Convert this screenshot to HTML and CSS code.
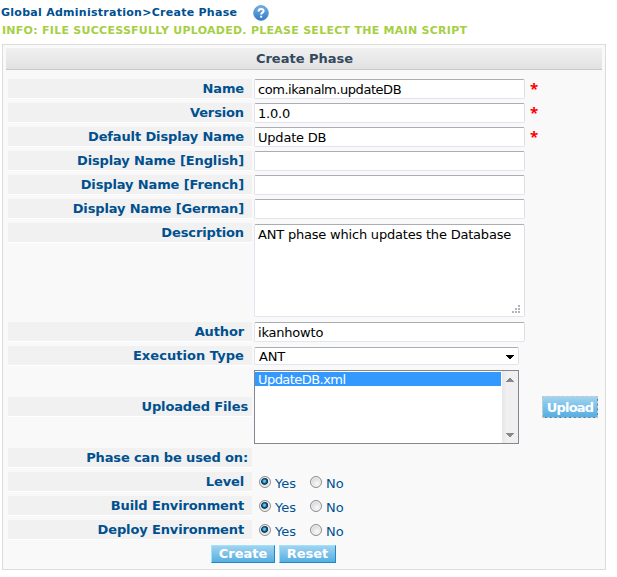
FILE: index.html
```html
<!DOCTYPE html>
<html lang="en">
<head>
<meta charset="utf-8">
<title>Create Phase</title>
<link rel="stylesheet" href="styles.css">
</head>
<body>
<header class="crumbs">
  <span>Global Administration&gt;Create Phase</span>
  <svg class="help" width="16" height="16" viewBox="0 0 16 16" aria-label="Help">
    <defs><linearGradient id="h" x1="0" y1="0" x2="0" y2="1"><stop offset="0" stop-color="#75b3e6"/><stop offset="1" stop-color="#2f78c2"/></linearGradient></defs>
    <circle cx="8" cy="8" r="7.4" fill="url(#h)" stroke="#5e96cb" stroke-width=".8"/>
    <path d="M5.500 6.400C5.500 4.500 6.600 3.900 8 3.900s2.600.8 2.600 2.200C10.600 7.700 8.200 7.700 8.200 9.500" fill="none" stroke="#fff" stroke-width="2"/>
    <rect x="7.200" y="10.700" width="2" height="2" fill="#fff"/>
  </svg>
</header>
<p class="info">INFO: FILE SUCCESSFULLY UPLOADED. PLEASE SELECT THE MAIN SCRIPT</p>
<form class="panel">
  <h1>Create Phase</h1>
  <div class="row"><label>Name</label><input class="field dotted-name" value="com.ikanalm.updateDB"><b class="req">*</b></div>
  <div class="row"><label>Version</label><input class="field" value="1.0.0"><b class="req">*</b></div>
  <div class="row"><label>Default Display Name</label><input class="field" value="Update DB"><b class="req">*</b></div>
  <div class="row"><label>Display Name [English]</label><input class="field"></div>
  <div class="row"><label>Display Name [French]</label><input class="field"></div>
  <div class="row"><label>Display Name [German]</label><input class="field"></div>
  <div class="row tall"><label>Description</label>
    <div class="field area"><span>ANT phase which updates the Database</span>
      <svg class="grip" width="8" height="8" fill="#b4b4b4"><path d="M6 0h2v2H6zM3 3h2v2H3zM6 3h2v2H6zM0 6h2v2H0zM3 6h2v2H3zM6 6h2v2H6z"/></svg>
    </div>
  </div>
  <div class="row"><label>Author</label><input class="field" value="ikanhowto"></div>
  <div class="row"><label class="loose">Execution Type</label>
    <div class="field select"><span>ANT</span><svg width="8" height="4"><path d="M0 0h8v1H7v1H6v1H5v1H3V3H2V2H1V1H0z"/></svg></div>
  </div>
  <div class="row files"><label class="wide">Uploaded Files</label>
    <div class="list">
      <div class="options"><div class="option">UpdateDB.xml</div></div>
      <div class="scroll">
        <svg width="8" height="4" fill="#888"><path d="M3 0h2v1h1v1h1v1h1v1H0V3h1V2h1V1h1z"/></svg>
        <svg width="8" height="4" fill="#888"><path d="M0 0h8v1H7v1H6v1H5v1H3V3H2V2H1V1H0z"/></svg>
      </div>
    </div>
    <button type="button" class="btn upload">Upload</button>
  </div>
  <div class="row"><label class="group">Phase can be used on:</label></div>
  <div class="row"><label>Level</label><div class="radios"><input type="radio" name="a" checked><span>Yes</span><input type="radio" name="a"><span>No</span></div></div>
  <div class="row"><label>Build Environment</label><div class="radios"><input type="radio" name="b" checked><span>Yes</span><input type="radio" name="b"><span>No</span></div></div>
  <div class="row"><label>Deploy Environment</label><div class="radios"><input type="radio" name="c" checked><span>Yes</span><input type="radio" name="c"><span>No</span></div></div>
  <div class="actions"><button type="button" class="btn create">Create</button><button type="button" class="btn reset">Reset</button></div>
</form>
</body>
</html>
```
FILE: styles.css
```css
* { box-sizing: border-box; }
body {
  margin: 0;
  background: #fff;
  color: #00508f;
  font: 13px/16px Verdana, "DejaVu Sans", sans-serif;
  overflow: hidden;
}
.crumbs {
  display: flex;
  align-items: center;
  height: 23px;
  padding: 2px 0 0 1px;
  font-size: 11px;
  font-weight: bold;
  letter-spacing: .27px;
}
.help { margin-left: 16px; }
.info {
  height: 21px;
  margin: 0;
  padding-left: 2px;
  color: #a5cf45;
  font-size: 11px;
  font-weight: bold;
  letter-spacing: .27px;
  white-space: nowrap;
}
.panel {
  width: 604px;
  height: 526px;
  margin-left: 2px;
  padding: 3px;
  border: 1px solid #dcdcdc;
  background: #f9f9f9;
}
h1 {
  height: 22px;
  margin: 0 0 9px;
  padding-left: 1px;
  border-bottom: 1px solid #c8c8c8;
  background: linear-gradient(#f0f0f0, #e2e2e2);
  color: #34495e;
  font-size: 13px;
  line-height: 21px;
  text-align: center;
}
.row {
  display: flex;
  align-items: flex-start;
  height: 24px;
  padding-left: 2px;
}
label {
  flex: none;
  width: 244px;
  height: 20px;
  margin-right: 2px;
  padding-right: 8px;
  border-bottom: 1px solid #fff;
  background: #f1f1f1;
  font-weight: bold;
  letter-spacing: -.13px;
  line-height: 19px;
  text-align: right;
}
label.wide, label.group { padding-right: 4px; }
label.loose { letter-spacing: .05px; }
.field {
  width: 271px;
  height: 20px;
  padding: 1px 3px 0;
  border: 1px solid #e2e5ee;
  border-top-color: #abadb3;
  border-right-color: #dbdfe6;
  border-radius: 2px;
  outline: 0;
  background: #fff;
  color: #000;
  font: inherit;
  letter-spacing: -.2px;
}
.dotted-name { letter-spacing: -.45px; }
.req {
  margin-left: 5px;
  color: #f00;
  font: bold 15px/18px "Noto Sans", sans-serif;
}
.tall { height: 99px; }
.area {
  display: flex;
  justify-content: space-between;
  height: 93px;
  margin-top: 1px;
  padding: 2px 4px 3px 3px;
  white-space: nowrap;
}
.grip { flex: none; align-self: flex-end; margin-left: -8px; }
.select {
  display: flex;
  align-items: center;
  justify-content: space-between;
  width: 265px;
  height: 18px;
  margin-top: 1px;
  padding: 1px 4px 0;
}
.files { height: 78px; align-items: center; padding-bottom: 4px; }
.list {
  display: flex;
  width: 265px;
  height: 74px;
  border: 1px solid #828790;
  background: #fff;
}
.options { flex: 1; padding-top: 1px; }
.option {
  height: 14px;
  padding-left: 3px;
  background: #39f;
  color: #fff;
  letter-spacing: -.55px;
  line-height: 15px;
}
.scroll {
  display: flex;
  flex-direction: column;
  align-items: center;
  justify-content: space-between;
  width: 16px;
  margin-left: 1px;
  padding: 7px 0 6px;
  background: linear-gradient(90deg, #e6e6e6, #f0f0f0 30%, #efefef);
}
.btn {
  height: 18px;
  padding: 0;
  border: 1px solid;
  border-color: #9ee4fb #2187c5 #2187c5 #9ee4fb;
  background: linear-gradient(#a0d3f0, #55aee2);
  color: #fff;
  font: bold 13px/16px Verdana, "DejaVu Sans", sans-serif;
}
.upload {
  width: 56px;
  height: 22px;
  margin-left: 23px;
  padding-top: 2px;
  outline: 1px dashed #c9c4bd;
  outline-offset: -1px;
  letter-spacing: -.8px;
}
.radios { display: flex; height: 20px; padding-left: 5px; }
.radios input {
  appearance: none;
  width: 12px;
  height: 12px;
  margin: 4px 4px 0 0;
  border: 1px solid #8b8d90;
  border-radius: 50%;
  background: radial-gradient(circle at 60% 65%, #f5f5f5 10%, #c9cdd1 90%);
  box-shadow: inset 0 0 0 1px #f4f4f4;
}
.radios input:checked {
  background: radial-gradient(circle at 45% 42%, #5cc4ed 0 1px, #15628f 2px, #0c3049 3.2px, #dfe3e6 4px);
}
.radios span { width: 35px; padding-top: 1px; line-height: 22px; }
.actions { display: flex; gap: 4px; padding: 1px 0 0 205px; }
.create { width: 64px; }
.reset { width: 57px; }
```
